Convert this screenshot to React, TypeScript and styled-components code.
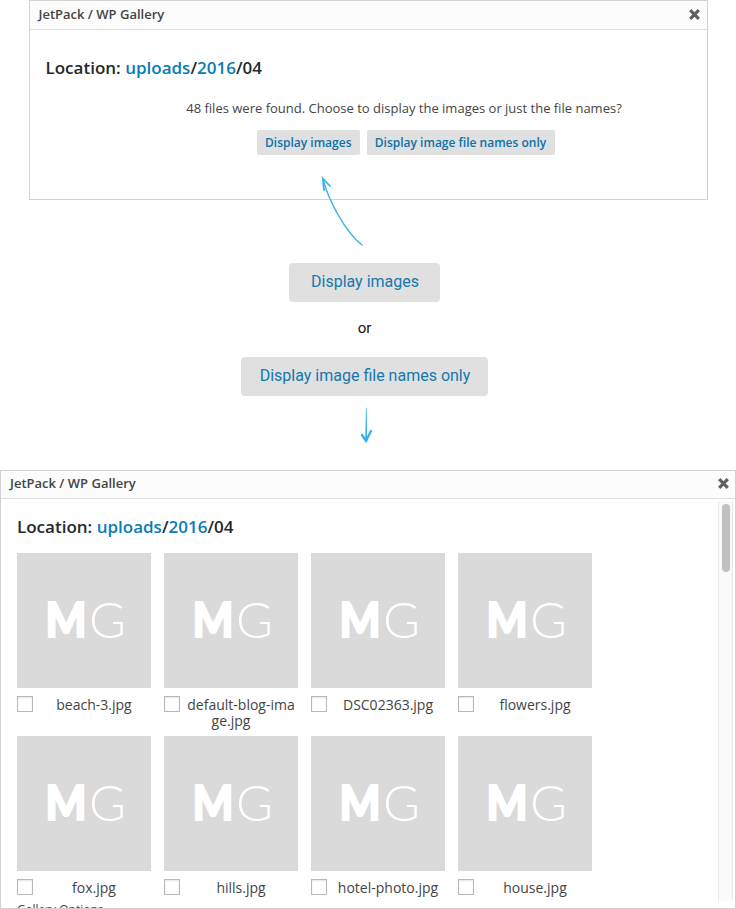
import React from 'react';
import styled, { createGlobalStyle } from 'styled-components';

const GlobalStyle = createGlobalStyle`
  * { box-sizing: border-box; }
  body { margin: 0; background: #fff; font-family: 'Open Sans', sans-serif; color: #444; overflow: hidden; }
`;

const Page = styled.main`
  width: 736px;
  height: 909px;
  display: flex;
  flex-direction: column;
  align-items: center;
  overflow: hidden;
`;

const Panel = styled.section<{ $wide?: boolean }>`
  width: ${p => (p.$wide ? 736 : 679)}px;
  height: ${p => (p.$wide ? 439 : 200)}px;
  flex: none;
  border: 1px solid #d2d2d2;
  display: flex;
  flex-direction: column;
  overflow: hidden;
  background: #fff;
`;

const TitleBar = styled.header<{ $wide?: boolean }>`
  flex: none;
  height: ${p => (p.$wide ? 28 : 29)}px;
  padding: ${p => (p.$wide ? '0 4px 3px 9px' : '0 5px 2px 9px')};
  display: flex;
  align-items: center;
  justify-content: space-between;
  border-bottom: 1px solid #dcdcdc;
  background: #fcfcfc;
`;

const Title = styled.h2`
  margin: 0;
  font-size: 13px;
  font-weight: 600;
  line-height: 18px;
  white-space: nowrap;
`;

const CloseButton = styled.button`
  display: flex;
  padding: 0;
  border: 0;
  background: none;
`;

const Location = styled.h3`
  margin: 0;
  font-size: 17px;
  font-weight: 600;
  line-height: 24px;
  color: #23282d;
  white-space: nowrap;
`;

const Crumb = styled.a`
  color: #0b7bb5;
`;

const PromptBody = styled.div`
  padding: 26px 16px 0;
  display: flex;
  flex-direction: column;
`;

const Prompt = styled.p`
  margin: 18px 0 12px 72px;
  text-align: center;
  font-size: 13px;
  line-height: 20px;
  white-space: nowrap;
`;

const Choices = styled.div`
  display: flex;
  gap: 7px;
  margin-left: 211.5px;
`;

const SmallButton = styled.button<{ $width: number }>`
  width: ${p => p.$width}px;
  height: 25px;
  flex: none;
  padding: 0;
  border: 0;
  border-radius: 2px;
  background: #e0e0e0;
  color: #0c72a9;
  font: 600 12px/25px 'Open Sans', sans-serif;
  white-space: nowrap;
`;

const Middle = styled.div`
  width: 736px;
  height: 270px;
  flex: none;
  padding: 63px 7px 0 0;
  display: flex;
  flex-direction: column;
  align-items: center;
  position: relative;
  font-family: Roboto, sans-serif;
`;

const LargeButton = styled.button<{ $width: number }>`
  width: ${p => p.$width}px;
  height: 39px;
  flex: none;
  padding: 0 0 2px 1px;
  border: 0;
  border-radius: 4px;
  background: #e0e0e0;
  color: #1578ad;
  font: 400 16px/37px Roboto, sans-serif;
  white-space: nowrap;
`;

const Or = styled.span`
  height: 55px;
  font-size: 15px;
  line-height: 52px;
  color: #111;
`;

const PointerArrow = styled.svg`
  position: absolute;
  left: 316px;
  top: -26px;
`;

const DownArrow = styled.svg`
  flex: none;
  margin: 12px 0 0 2px;
`;

const Content = styled.div`
  flex: 1;
  min-height: 0;
  display: flex;
  justify-content: space-between;
  overflow: hidden;
`;

const Gallery = styled.div`
  padding: 16px 0 0 16px;
`;

const Grid = styled.div`
  margin-top: 14px;
  display: grid;
  grid-template-columns: repeat(4, 134px);
  column-gap: 13px;
  grid-template-rows: 183px 165px;
`;

const Thumb = styled.div`
  height: 135px;
  background: #dadada;
`;

const Mark = styled.svg`
  display: block;
`;

const FileLabel = styled.label`
  display: block;
  padding-top: 9px;
  font-size: 14px;
  line-height: 16px;
  text-align: center;
  word-break: break-all;
`;

const Checkbox = styled.input`
  float: left;
  appearance: none;
  width: 16px;
  height: 16px;
  margin: -1px 4px 0 0;
  border: 1px solid #b4b9be;
  background: #fff;
  box-shadow: inset 0 1px 2px rgba(0, 0, 0, 0.1);
`;

const Options = styled.p`
  margin: 0;
  font-size: 12px;
  line-height: 17px;
`;

const Track = styled.div`
  width: 15px;
  height: 400px;
  margin: 2px 2px 0 0;
  padding: 3px 2px 0 3px;
  border: solid #e8e8e8;
  border-width: 0 1px;
  background: #fafafa;
`;

const Handle = styled.div`
  width: 8px;
  height: 68px;
  border-radius: 4px;
  background: #c1c1c1;
`;

const Close = () => (
  <CloseButton aria-label="Close">
    <svg width="15" height="13" viewBox="0 0 15 13">
      <path d="M3.200 2.200L11.800 10.800M11.800 2.200L3.200 10.800" stroke="#606060" strokeWidth="3.200" />
    </svg>
  </CloseButton>
);

const Path = () => (
  <Location>
    Location: <Crumb>uploads</Crumb>/<Crumb>2016</Crumb>/04
  </Location>
);

const Placeholder = () => (
  <Thumb>
    <Mark width="134" height="135" fill="#fff">
      <text x="28.500" y="84" fontFamily="Lato" fontWeight="900" fontSize="48" textLength="41" lengthAdjust="spacingAndGlyphs" stroke="#fff" strokeWidth="2">M</text>
      <text x="72" y="84.500" fontFamily="Lato" fontWeight="300" fontSize="49" textLength="37" lengthAdjust="spacingAndGlyphs">G</text>
    </Mark>
  </Thumb>
);

const files = [
  'beach-3.jpg', 'default-blog-image.jpg', 'DSC02363.jpg', 'flowers.jpg',
  'fox.jpg', 'hills.jpg', 'hotel-photo.jpg', 'house.jpg',
];

export default function App() {
  return (
    <Page>
      <GlobalStyle />
      <Panel>
        <TitleBar>
          <Title>JetPack / WP Gallery</Title>
          <Close />
        </TitleBar>
        <PromptBody>
          <Path />
          <Prompt>48 files were found. Choose to display the images or just the file names?</Prompt>
          <Choices>
            <SmallButton $width={102.5}>Display images</SmallButton>
            <SmallButton $width={188}>Display image file names only</SmallButton>
          </Choices>
        </PromptBody>
      </Panel>
      <Middle>
        <PointerArrow width="52" height="76" fill="none" stroke="#3db5e6" strokeLinecap="round">
          <path d="M7 5C12 25 29 58 46 71" strokeWidth="1.4" />
          <path d="M8 16L6.800 4.500L14 12" strokeWidth="1.8" />
        </PointerArrow>
        <LargeButton $width={151}>Display images</LargeButton>
        <Or>or</Or>
        <LargeButton $width={247}>Display image file names only</LargeButton>
        <DownArrow width="14" height="36" viewBox="0 0 14 36" fill="none">
          <path d="M6.900 0H7.600L8.200 33H6.200Z" fill="#35b0e3" />
          <path d="M3 27L7 33L12 23" stroke="#35b0e3" strokeWidth="2.300" strokeLinecap="round" />
        </DownArrow>
      </Middle>
      <Panel $wide>
        <TitleBar $wide>
          <Title>JetPack / WP Gallery</Title>
          <Close />
        </TitleBar>
        <Content>
          <Gallery>
            <Path />
            <Grid>
              {files.map(name => (
                <div key={name}>
                  <Placeholder />
                  <FileLabel>
                    <Checkbox type="checkbox" />
                    {name}
                  </FileLabel>
                </div>
              ))}
            </Grid>
            <Options>Gallery Options</Options>
          </Gallery>
          <Track><Handle /></Track>
        </Content>
      </Panel>
    </Page>
  );
}
